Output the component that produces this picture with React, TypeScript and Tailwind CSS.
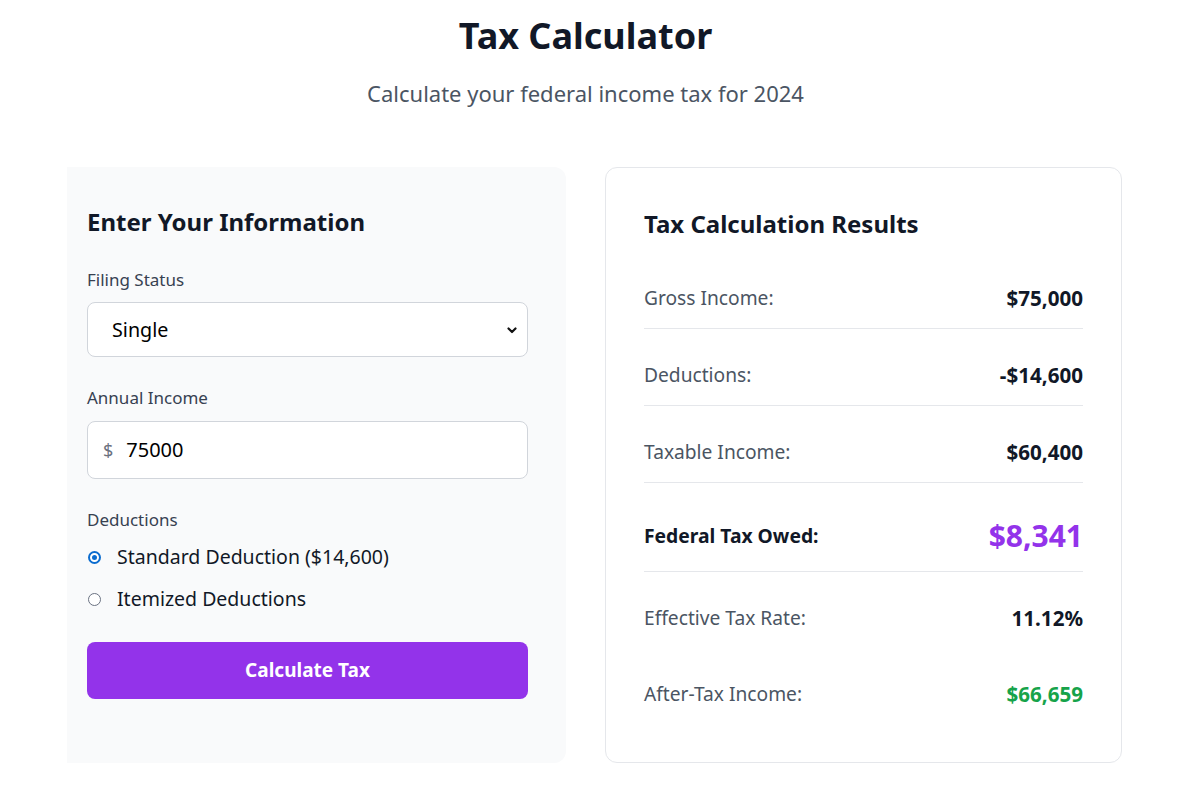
import { useState } from 'react';

const FONT = "font-['Segoe_UI','Noto_Sans',sans-serif]";

/** Строка результата (подпись слева, значение справа). */
function ResultRow({
  label,
  value,
  valueClass,
  border = true,
  big = false,
}: {
  label: string;
  value: string;
  valueClass?: string;
  border?: boolean;
  big?: boolean;
}) {
  return (
    <div
      className={`flex items-center justify-between ${big ? 'pt-[19px] pb-[17px]' : 'py-4'} ${
        border ? 'border-b border-[#e5e7eb]' : ''
      }`}
    >
      <span
        className={
          big
            ? 'text-[19.3px] leading-7 font-bold text-[#111827]'
            : 'text-[19.2px] leading-7 text-[#4b5563]'
        }
      >
        {label}
      </span>
      <span
        className={
          big
            ? `text-3xl leading-9 font-bold ${valueClass ?? ''}`
            : `text-[20.6px] leading-7 font-bold ${valueClass ?? 'text-[#111827]'}`
        }
      >
        {value}
      </span>
    </div>
  );
}

function Radio({ checked, label, onClick }: { checked: boolean; label: string; onClick: () => void }) {
  return (
    <button type="button" onClick={onClick} className="flex h-7 items-center text-left">
      <span className="flex w-[15px] justify-center">
        {checked ? (
          <span className="flex h-[13px] w-[13px] items-center justify-center rounded-full bg-[#0b6ccf]">
            <span className="h-[9px] w-[9px] rounded-full border-2 border-white bg-[#0b6ccf]" />
          </span>
        ) : (
          <span className="h-[13px] w-[13px] rounded-full border border-gray-500 bg-white" />
        )}
      </span>
      <span className="ml-[15px] text-[19.5px] leading-7 text-[#111827]">{label}</span>
    </button>
  );
}

export default function App() {
  const [status, setStatus] = useState('single');
  const [income, setIncome] = useState('75000');
  const [standard, setStandard] = useState(true);

  return (
    <div className={`min-h-screen w-[1185px] bg-white pt-4 ${FONT}`}>
      <header className="pr-[14px] text-center">
        <h1 className="text-4xl leading-10 font-bold text-[#111827]">Tax Calculator</h1>
        <p className="mt-[23px] text-[22px] leading-7 text-[#4b5563]">
          Calculate your federal income tax for 2024
        </p>
      </header>

      <div className="mt-[60px] flex gap-[39px] pl-[67px]">
        {/* Форма */}
        <section className="w-[499px] rounded-r-xl bg-[#f9fafb] pt-[39px] pr-[38px] pl-5">
          <h2 className="text-2xl leading-8 font-bold text-[#111827]">Enter Your Information</h2>

          <div className="mt-[30px]">
            <label className="block text-[17px] leading-6 text-[#374151]">Filing Status</label>
            <div className="relative mt-[10px]">
              <select
                value={status}
                onChange={(e) => setStatus(e.target.value)}
                className="h-[55px] w-full appearance-none rounded-lg border border-[#d1d5db] bg-white pl-6 text-[19.7px] text-black outline-none"
              >
                <option value="single">Single</option>
                <option value="married">Married Filing Jointly</option>
                <option value="head">Head of Household</option>
              </select>
              <svg
                className="pointer-events-none absolute top-1/2 right-[10px] h-3 w-3 -translate-y-1/2"
                viewBox="0 0 12 12"
                fill="none"
                stroke="#111"
                strokeWidth="2.2"
                strokeLinecap="round"
                strokeLinejoin="round"
              >
                <path d="M2.5 4.5 6 8l3.5-3.5" />
              </svg>
            </div>
          </div>

          <div className="mt-[29px]">
            <label className="block text-[17px] leading-6 text-[#374151]">Annual Income</label>
            <div className="mt-[11px] flex h-[58px] items-center rounded-lg border border-[#d1d5db] bg-white pl-[15px]">
              <span className="text-lg text-[#6b7280]">$</span>
              <input
                value={income}
                onChange={(e) => setIncome(e.target.value)}
                className="ml-[13px] w-full bg-transparent text-xl text-black outline-none"
              />
            </div>
          </div>

          <div className="mt-[29px]">
            <span className="block text-[17px] leading-6 text-[#374151]">Deductions</span>
            <div className="mt-[11px] flex flex-col gap-[14px]">
              <Radio checked={standard} label="Standard Deduction ($14,600)" onClick={() => setStandard(true)} />
              <Radio checked={!standard} label="Itemized Deductions" onClick={() => setStandard(false)} />
            </div>
          </div>

          <button
            type="button"
            className="mt-[29px] h-[57px] w-full rounded-lg bg-[#9333ea] text-[19px] font-bold text-white"
          >
            Calculate Tax
          </button>
        </section>

        {/* Результаты */}
        <section className="w-[517px] rounded-xl border border-[#e5e7eb] bg-white px-[38px] pt-10 pb-[38px]">
          <h2 className="text-2xl leading-8 font-bold text-[#111827]">Tax Calculation Results</h2>
          <div className="mt-[28px] flex flex-col gap-4">
            <ResultRow label="Gross Income:" value="$75,000" />
            <ResultRow label="Deductions:" value="-$14,600" />
            <ResultRow label="Taxable Income:" value="$60,400" />
            <ResultRow label="Federal Tax Owed:" value="$8,341" valueClass="text-[#9333ea]" big />
            <ResultRow label="Effective Tax Rate:" value="11.12%" border={false} />
            <ResultRow label="After-Tax Income:" value="$66,659" valueClass="text-[#16a34a]" border={false} />
          </div>
        </section>
      </div>
    </div>
  );
}
